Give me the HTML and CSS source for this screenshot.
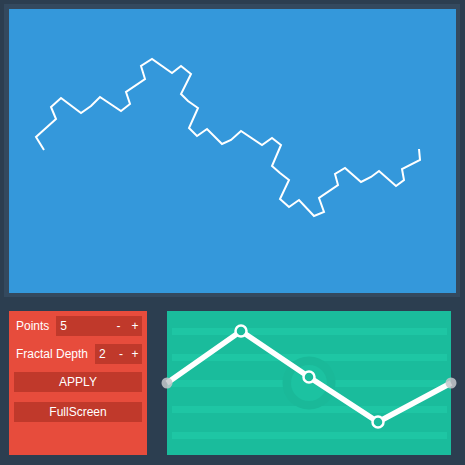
FILE: index.html
```html
<!DOCTYPE html>
<html>
<head>
<meta charset="utf-8">
<link rel="stylesheet" href="styles.css">
</head>
<body>
<div class="frame">
  <div class="canvas">
    <svg class="fractal" width="447" height="284" viewBox="0 0 447 284">
      <g transform="translate(-9,-9)">
        <polyline points="44,150 36,137 56,119 51,107 61,98 81,113 91,106 100,97 121,111 130,104 126,92 145,79 141,66 152,59 172,73 181,66 191,74 181,94 188,101 198,108 189,128 197,136 207,129 222,144 231,140 241,131 262,145 272,138 281,145 272,166 280,173 289,180 280,199 289,207 299,200 314,216 324,212 319,198 338,185 335,174 345,168 361,182 371,177 379,171 396,186 404,180 402,169 420,160 419,149" />
      </g>
    </svg>
  </div>
</div>
<div class="bottom">
  <div class="controls">
    <div class="row">
      <span class="label">Points</span>
      <div class="field"><span class="value">5</span><span class="minus wide">-</span><span class="plus">+</span></div>
    </div>
    <div class="row">
      <span class="label">Fractal Depth</span>
      <div class="field"><span class="value">2</span><span class="minus">-</span><span class="plus">+</span></div>
    </div>
    <div class="btn">APPLY</div>
    <div class="btn second">FullScreen</div>
  </div>
  <div class="graph">
    <svg class="curve" width="284" height="144" viewBox="0 0 284 144">
      <g transform="translate(-167,-311)">
        <rect class="stripe" x="172" y="328" width="275" height="7"/>
        <rect class="stripe" x="172" y="354" width="275" height="7"/>
        <rect class="stripe" x="172" y="380" width="275" height="7"/>
        <rect class="stripe" x="172" y="406" width="275" height="7"/>
        <rect class="stripe" x="172" y="432" width="275" height="7"/>
        <circle class="halo" cx="309" cy="383" r="26.5"/>
        <circle class="core" cx="309" cy="383" r="18"/>
        <polyline class="line" points="167,383 241,331 309,377 378,422 451,383"/>
        <circle class="node" cx="241" cy="331" r="5.5"/>
        <circle class="node" cx="309" cy="377" r="5.5"/>
        <circle class="node" cx="378" cy="422" r="5.5"/>
        <circle class="end" cx="167" cy="383" r="5.5"/>
        <circle class="end" cx="451" cy="383" r="5.5"/>
      </g>
    </svg>
  </div>
</div>
</body>
</html>
```

FILE: styles.css
```css
html, body {
  margin: 0;
  padding: 0;
  background: #2c3e50;
  width: 465px;
  height: 465px;
  overflow: hidden;
  font-family: "Liberation Sans", Arial, sans-serif;
  font-size: 12px;
  color: #fff;
}

.frame {
  margin: 4px 0 0 4px;
  width: 447px;
  height: 284px;
  padding: 5px 4px 4px 5px;
  background: #34495e;
}

.canvas {
  width: 447px;
  height: 284px;
  background: #3498db;
}

.fractal {
  display: block;
}

.fractal polyline {
  fill: none;
  stroke: #fff;
  stroke-width: 2;
  stroke-linejoin: miter;
}

.bottom {
  display: flex;
  margin: 14px 0 0 9px;
  gap: 20px;
}

.controls {
  width: 128px;
  height: 139px;
  background: #e74c3c;
  padding: 5px 5px 0 5px;
  display: flex;
  flex-direction: column;
  gap: 8px;
}

.row {
  display: flex;
  align-items: center;
  height: 20px;
}

.label {
  padding-left: 2px;
  margin-right: 7px;
  white-space: nowrap;
}

.field {
  flex: 1;
  height: 20px;
  background: #c0392b;
  display: flex;
  align-items: center;
  padding-left: 4px;
  line-height: 20px;
}

.value {
  flex: 1;
}

.minus {
  width: 14px;
  text-align: center;
}

.minus.wide {
  width: 19px;
}

.plus {
  width: 14px;
  text-align: center;
}

.btn {
  height: 20px;
  line-height: 20px;
  background: #c0392b;
  text-align: center;
}

.btn.second {
  margin-top: 2px;
}

.graph {
  width: 284px;
  height: 144px;
  background: #1abc9c;
}

.curve {
  display: block;
  overflow: visible;
}

.stripe {
  fill: #1ec6a4;
}

.halo {
  fill: #1ab999;
}

.core {
  fill: #1cc2a1;
}

.line {
  fill: none;
  stroke: #fff;
  stroke-width: 5.5;
  stroke-linejoin: miter;
}

.node {
  fill: #1abc9c;
  stroke: #fff;
  stroke-width: 2.5;
}

.end {
  fill: #c4c9cc;
  fill-opacity: 0.85;
}
```
